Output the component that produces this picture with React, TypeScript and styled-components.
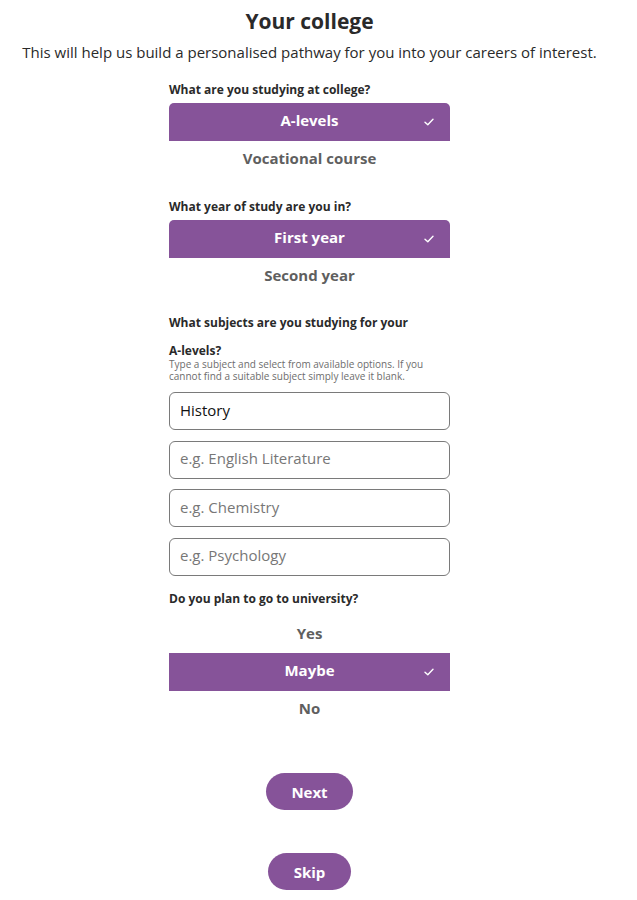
import styled, { createGlobalStyle } from 'styled-components'

const purple = '#865399'

const GlobalStyle = createGlobalStyle`
  body {
    margin: 0;
    background: #ffffff;
    font-family: 'Open Sans', 'Liberation Sans', sans-serif;
    color: #222222;
  }
`

interface Option {
  label: string
  selected?: boolean
}

const Check = () => (
  <svg width="10" height="8" viewBox="0 0 10 8" fill="none">
    <path d="M1 4.2 L3.8 6.8 L9 1.2" stroke="#ffffff" strokeWidth="1.4" strokeLinecap="round" strokeLinejoin="round" />
  </svg>
)

const Choices = ({ options }: { options: Option[] }) => (
  <ChoiceList>
    {options.map((o, i) => (
      <ChoiceItem
        key={o.label}
        selected={!!o.selected}
        first={i === 0}
        last={i === options.length - 1}
      >
        {o.label}
        {o.selected && (
          <CheckWrap>
            <Check />
          </CheckWrap>
        )}
      </ChoiceItem>
    ))}
  </ChoiceList>
)

export default function App() {
  return (
    <Page>
      <GlobalStyle />
      <Title>Your college</Title>
      <Intro>This will help us build a personalised pathway for you into your careers of interest.</Intro>
      <Form>
        <Question>What are you studying at college?</Question>
        <Choices options={[{ label: 'A-levels', selected: true }, { label: 'Vocational course' }]} />

        <Question top={21}>What year of study are you in?</Question>
        <Choices options={[{ label: 'First year', selected: true }, { label: 'Second year' }]} />

        <Question top={14} tall>
          What subjects are you studying for your A-levels?
        </Question>
        <Hint>
          Type a subject and select from available options. If you cannot find a suitable subject simply leave it
          blank.
        </Hint>
        <Inputs>
          <TextInput defaultValue="History" />
          <TextInput placeholder="e.g. English Literature" />
          <TextInput placeholder="e.g. Chemistry" />
          <TextInput placeholder="e.g. Psychology" />
        </Inputs>

        <Question top={15} bottom={9}>
          Do you plan to go to university?
        </Question>
        <Choices options={[{ label: 'Yes' }, { label: 'Maybe', selected: true }, { label: 'No' }]} />
      </Form>
      <Actions>
        <PillButton>Next</PillButton>
        <PillButton narrow>Skip</PillButton>
      </Actions>
    </Page>
  )
}

const Page = styled.div`
  width: 619px;
  display: flex;
  flex-direction: column;
  align-items: center;
  padding-top: 8px;
`

const Title = styled.h1`
  margin: 0;
  font-size: 21px;
  line-height: 26px;
  font-weight: 700;
  color: #2a2a2a;
`

const Intro = styled.p`
  margin: 8px 0 0;
  font-size: 15px;
  line-height: 20px;
  color: #2a2a2a;
  text-align: center;
`

const Form = styled.div`
  width: 281px;
  display: flex;
  flex-direction: column;
  margin-top: 20px;
`

const Question = styled.div<{ top?: number; bottom?: number; tall?: boolean }>`
  font-size: 12px;
  font-weight: 700;
  line-height: ${({ tall }) => (tall ? '28px' : '16px')};
  margin-top: ${({ top = 0 }) => top}px;
  margin-bottom: ${({ tall, bottom = 5 }) => (tall ? 0 : bottom)}px;
  color: #2a2a2a;
  padding-right: ${({ tall }) => (tall ? '40px' : '0')};
`

const Hint = styled.div`
  font-size: 10px;
  line-height: 12px;
  color: #6d6d6d;
  margin-top: -7px;
  margin-bottom: 10px;
  padding-right: 20px;
`

const ChoiceList = styled.div`
  display: flex;
  flex-direction: column;
`

const ChoiceItem = styled.div<{ selected: boolean; first: boolean; last: boolean }>`
  position: relative;
  box-sizing: border-box;
  height: 37.5px;
  padding-bottom: ${({ selected }) => (selected ? '4px' : '2px')};
  display: flex;
  align-items: center;
  justify-content: center;
  font-size: 15px;
  font-weight: 700;
  color: ${({ selected }) => (selected ? '#ffffff' : '#5f5f5f')};
  background: ${({ selected }) => (selected ? purple : 'transparent')};
  border-radius: ${({ first, last }) => `${first ? '5px 5px' : '0 0'} ${last ? '5px 5px' : '0 0'}`};
`

const CheckWrap = styled.span`
  position: absolute;
  right: 16px;
  top: 50%;
  transform: translateY(-50%);
  display: flex;
`

const Inputs = styled.div`
  display: flex;
  flex-direction: column;
  gap: 10.5px;
`

const TextInput = styled.input`
  box-sizing: border-box;
  width: 100%;
  height: 38px;
  border: 1px solid #7a7a7a;
  border-radius: 6px;
  padding: 0 10px 3px;
  font-family: 'Open Sans', 'Liberation Sans', sans-serif;
  font-size: 15px;
  color: #111111;
  background: #ffffff;
  outline: none;

  &::placeholder {
    color: #777777;
  }
`

const Actions = styled.div`
  display: flex;
  flex-direction: column;
  align-items: center;
  gap: 43px;
  margin-top: 45px;
  padding-bottom: 8px;
`

const PillButton = styled.button<{ narrow?: boolean }>`
  width: ${({ narrow }) => (narrow ? '83px' : '87px')};
  height: 37px;
  border: none;
  border-radius: 19px;
  background: ${purple};
  color: #ffffff;
  font-family: 'Open Sans', 'Liberation Sans', sans-serif;
  font-size: 15px;
  font-weight: 700;
  cursor: pointer;
`
